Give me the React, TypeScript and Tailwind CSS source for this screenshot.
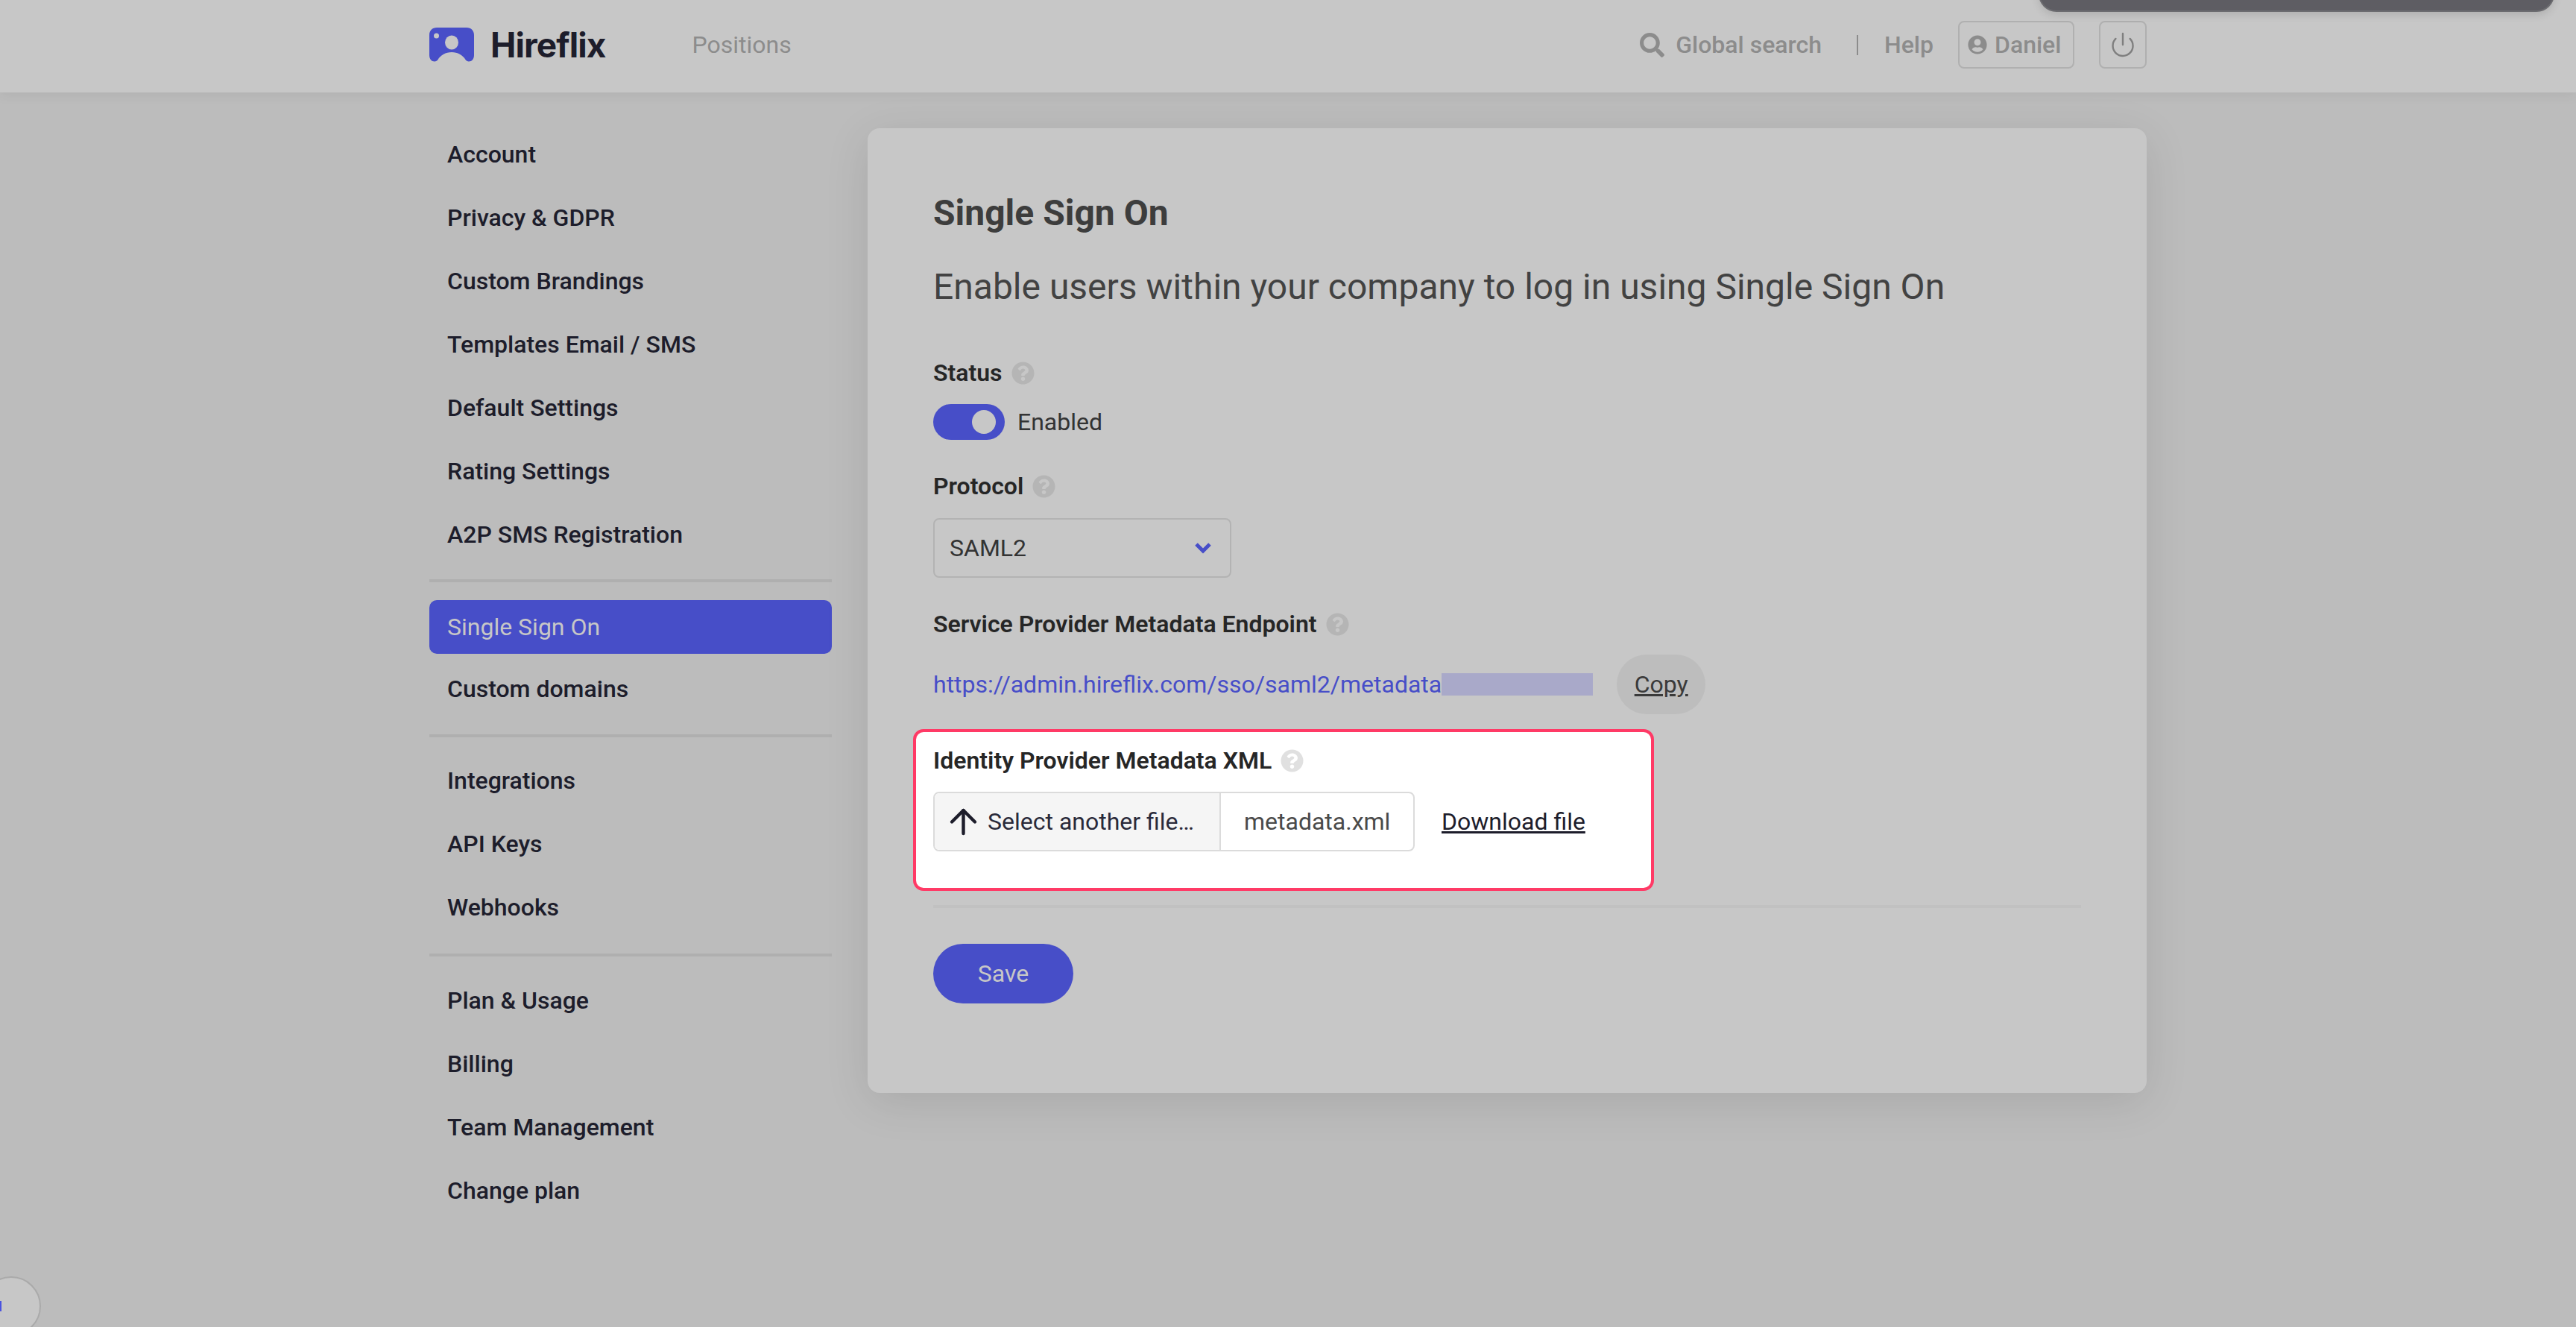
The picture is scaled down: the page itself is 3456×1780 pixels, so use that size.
import { ArrowUp, Power } from "lucide-react";
import { FaQuestionCircle, FaSearch, FaUserCircle } from "react-icons/fa";

const NAV_GROUPS = [
  {
    cls: "flex flex-col gap-[13px]",
    items: ["Account", "Privacy & GDPR", "Custom Brandings", "Templates Email / SMS", "Default Settings", "Rating Settings", "A2P SMS Registration"],
  },
  {
    cls: "mt-[24px] pt-[24px] border-t-4 border-[#afafaf] flex flex-col gap-[11px]",
    items: ["Single Sign On", "Custom domains"],
  },
  {
    cls: "mt-[25px] pt-[22px] border-t-4 border-[#afafaf] flex flex-col gap-[13px]",
    items: ["Integrations", "API Keys", "Webhooks"],
  },
  {
    cls: "mt-[26px] pt-[23px] border-t-4 border-[#afafaf] flex flex-col gap-[13px]",
    items: ["Plan & Usage", "Billing", "Team Management", "Change plan"],
  },
];

function Logo() {
  return (
    <svg width="60" height="46" viewBox="0 0 60 46" className="shrink-0">
      <path
        d="M10 0H50C56 0 60 4 60 10V37C60 42 57 45.500 53 45.500C51 45.500 49.500 44.500 48.500 43C45 37 38 33 30 33C22 33 15 37 11.500 43C10.500 44.500 9 45.500 7 45.500C3 45.500 0 42 0 37V10C0 4 4 0 10 0Z"
        fill="#474ec8"
      />
      <ellipse cx="30" cy="20" rx="9" ry="9.500" fill="#c7c7c7" />
      <ellipse cx="9.500" cy="11" rx="3.500" ry="3.500" fill="#c7c7c7" />
    </svg>
  );
}

function Help({ light }: { light?: boolean }) {
  return <FaQuestionCircle className={light ? "w-[31px] h-[31px] text-[#e0e0e0]" : "w-[31px] h-[31px] text-[#b5b5b5]"} />;
}

function Label({ text, light }: { text: string; light?: boolean }) {
  return (
    <div className="flex items-center gap-[12px] h-[40px]">
      <span className="text-[32px] leading-[40px] font-semibold text-[#262626]">{text}</span>
      <Help light={light} />
    </div>
  );
}

export default function App() {
  return (
    <div className="relative h-[1780px] overflow-hidden bg-[#bcbcbc] font-['Roboto',sans-serif]">
      <div className="absolute top-[-24px] left-[2735px] w-[692px] h-[40px] rounded-b-[24px] bg-[#5e5d63] border-b-2 border-x-2 border-[#6c6c70] shadow-[0_4px_12px_rgba(0,0,0,0.12)] z-10" />

      <header className="h-[124px] bg-[#c7c7c7] shadow-[0_4px_16px_rgba(0,0,0,0.06)]">
        <div className="w-[2304px] h-full mx-auto flex items-center">
          <div className="flex items-center gap-[22px] mt-[-4px]">
            <Logo />
            <span className="font-['Inter',sans-serif] font-bold text-[46px] leading-[56px] tracking-[-0.9px] text-[#1d1d2b]">Hireflix</span>
          </div>
          <span className="ml-[116px] text-[32px] leading-[40px] text-[#8c8c8c] mt-[-4px]">Positions</span>
          <div className="ml-auto flex items-center text-[#8c8c8c] mt-[-4px] text-[32px] leading-[40px]">
            <FaSearch className="w-[33px] h-[33px]" />
            <span className="ml-[15px] font-medium">Global search</span>
            <span className="ml-[47px] w-[2px] h-[27px] bg-[#8c8c8c]" />
            <span className="ml-[35px] font-medium">Help</span>
            <div className="ml-[33px] w-[156px] h-[64px] rounded-[8px] border-2 border-[#b0b0b0] flex items-center pl-[11px]">
              <FaUserCircle className="w-[26px] h-[26px]" />
              <span className="ml-[10px] font-medium">Daniel</span>
            </div>
            <div className="ml-[33px] w-[64px] h-[64px] rounded-[8px] border-2 border-[#b0b0b0] flex items-center justify-center">
              <Power className="w-[36px] h-[36px] text-[#7f7f7f]" strokeWidth={1.6} />
            </div>
          </div>
        </div>
      </header>

      <main className="w-[2304px] mx-auto flex items-start gap-[48px] pt-[48px]">
        <nav className="w-[540px] shrink-0 mt-[-1px]">
          {NAV_GROUPS.map((group, i) => (
            <div key={i} className={group.cls}>
              {group.items.map(item => (
                <a
                  key={item}
                  className={
                    item === "Single Sign On"
                      ? "h-[72px] px-[24px] flex items-center rounded-[10px] bg-[#474ec8] text-[#c7c7c7] text-[32px] font-normal"
                      : "h-[72px] px-[24px] flex items-center text-[#1d1d2b] text-[32px] font-medium"
                  }
                >
                  {item}
                </a>
              ))}
            </div>
          ))}
        </nav>

        <section className="flex-1 h-[1294px] rounded-[16px] bg-[#c7c7c7] shadow-[0_12px_60px_rgba(0,0,0,0.1)] px-[88px] pt-[86px]">
          <h1 className="text-[48px] leading-[56px] font-bold text-[#3d3d3d]">Single Sign On</h1>
          <p className="mt-[43px] text-[48px] leading-[56px] text-[#424242]">Enable users within your company to log in using Single Sign On</p>

          <div className="mt-[67px]">
            <Label text="Status" />
          </div>
          <div className="mt-[22px] flex items-center gap-[17px]">
            <div className="w-[96px] h-[48px] rounded-full bg-[#474ec8] flex items-center justify-end pr-[12px]">
              <div className="w-[32px] h-[32px] rounded-full bg-[#c7c7c7]" />
            </div>
            <span className="text-[32px] leading-[40px] text-[#333333]">Enabled</span>
          </div>

          <div className="mt-[42px]">
            <Label text="Protocol" />
          </div>
          <div className="mt-[23px] w-[400px] h-[80px] rounded-[8px] border-2 border-[#b3b3b3] flex items-center justify-between pl-[20px] pr-[24px]">
            <span className="text-[32px] text-[#333333]">SAML2</span>
            <svg width="24" height="16" viewBox="0 0 24 16" fill="none">
              <path d="M3 3L12 12L21 3" stroke="#474ec8" strokeWidth="5" />
            </svg>
          </div>

          <div className="mt-[42px]">
            <Label text="Service Provider Metadata Endpoint" />
          </div>
          <div className="mt-[21px] flex items-center h-[80px]">
            <a className="text-[32px] leading-[40px] text-[#474ec8]">https://admin.hireflix.com/sso/saml2/metadata</a>
            <span className="w-[203px] h-[30px] bg-[#a9a9c9]" />
            <button className="ml-[32px] w-[119px] h-[80px] rounded-full bg-[#bdbdbd] text-[32px] text-[#3a3a3a] underline">Copy</button>
          </div>

          <div className="relative mt-[20px] ml-[-27px] w-[994px] h-[217px] rounded-[14px] border-4 border-[#ff3a66] bg-white pl-[23px] pt-[18px]">
            <Label text="Identity Provider Metadata XML" light />
            <div className="mt-[22px] flex items-center">
              <div className="w-[646px] h-[80px] rounded-[8px] border-2 border-[#dbdbdb] flex items-stretch overflow-hidden">
                <div className="w-[384px] bg-[#f5f5f5] border-r-2 border-[#dbdbdb] flex items-center pl-[12px]">
                  <ArrowUp className="w-[53px] h-[53px] text-[#1d1d2b]" strokeWidth={2} />
                  <span className="ml-[6px] text-[32px] text-[#2a2a3a]">Select another file…</span>
                </div>
                <div className="flex-1 flex items-center pl-[31px] text-[32px] text-[#4a4a4a]">metadata.xml</div>
              </div>
              <a className="ml-[36px] text-[32px] text-[#1d1d2b] underline">Download file</a>
            </div>
          </div>

          <div className="mt-[19px] h-[4px] bg-[#c1c1c1]" />
          <button className="mt-[48px] w-[188px] h-[80px] rounded-full bg-[#474ec8] text-[32px] text-[#c7c7c7]">Save</button>
        </section>
      </main>

      <div className="absolute left-[-25px] top-[1712px] w-[80px] h-[80px] rounded-full bg-[#c7c7c7] border-2 border-[#aaaaaa]" />
      <div className="absolute left-0 top-[1745px] w-[2px] h-[14px] bg-[#4a52e0]" />
    </div>
  );
}
